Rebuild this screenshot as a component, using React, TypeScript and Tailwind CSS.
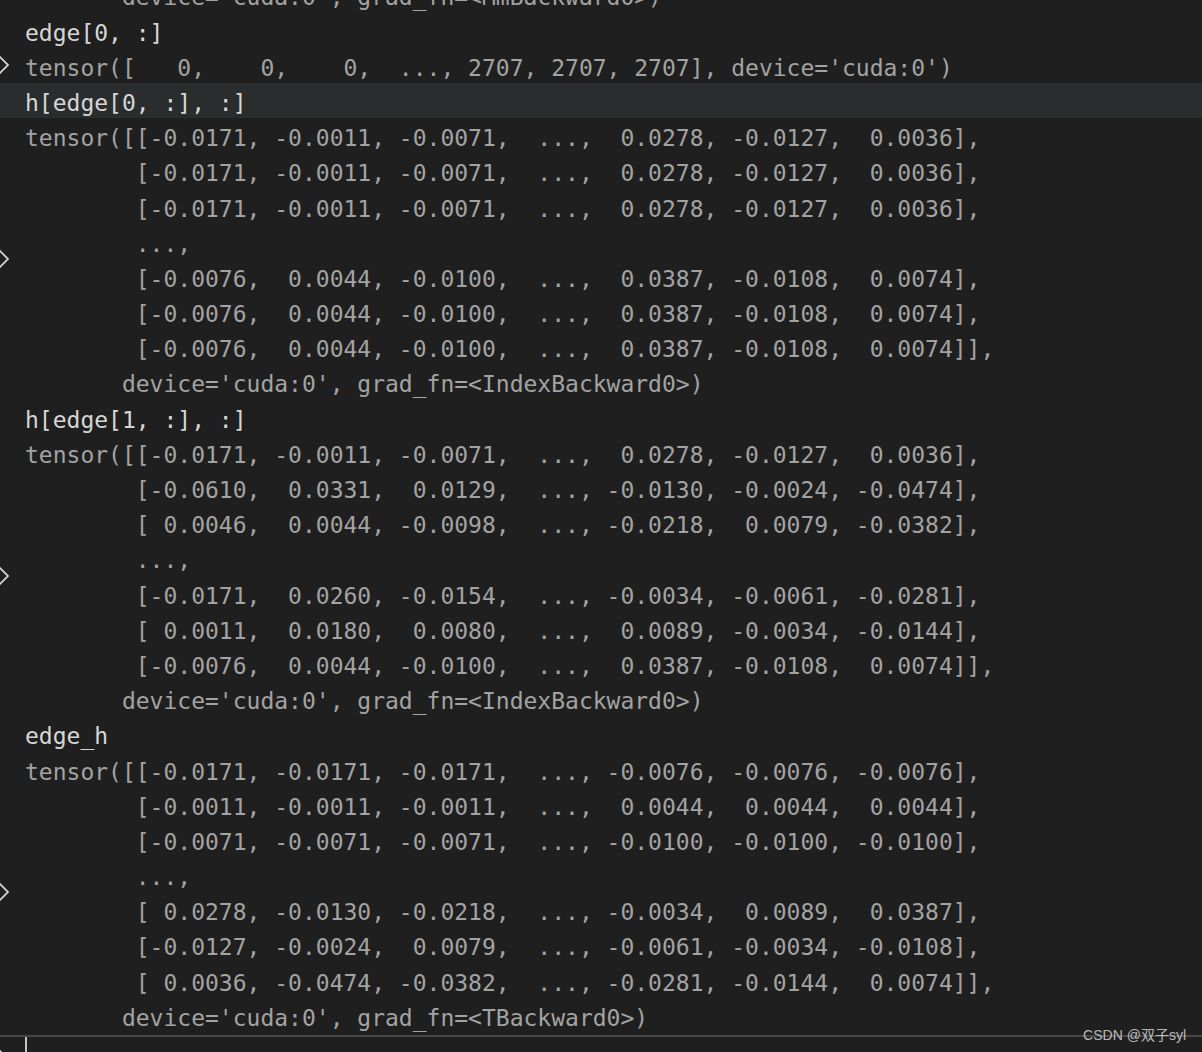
import React from 'react';

type Entry = { kind: 'in' | 'out'; lines: string[] };

const entries: Entry[] = [
  { kind: 'out', lines: ["       device='cuda:0', grad_fn=<MmBackward0>)"] },
  { kind: 'in', lines: ['edge[0, :]'] },
  { kind: 'out', lines: ["tensor([   0,    0,    0,  ..., 2707, 2707, 2707], device='cuda:0')"] },
  { kind: 'in', lines: ['h[edge[0, :], :]'] },
  {
    kind: 'out',
    lines: [
      'tensor([[-0.0171, -0.0011, -0.0071,  ...,  0.0278, -0.0127,  0.0036],',
      '        [-0.0171, -0.0011, -0.0071,  ...,  0.0278, -0.0127,  0.0036],',
      '        [-0.0171, -0.0011, -0.0071,  ...,  0.0278, -0.0127,  0.0036],',
      '        ...,',
      '        [-0.0076,  0.0044, -0.0100,  ...,  0.0387, -0.0108,  0.0074],',
      '        [-0.0076,  0.0044, -0.0100,  ...,  0.0387, -0.0108,  0.0074],',
      '        [-0.0076,  0.0044, -0.0100,  ...,  0.0387, -0.0108,  0.0074]],',
      "       device='cuda:0', grad_fn=<IndexBackward0>)",
    ],
  },
  { kind: 'in', lines: ['h[edge[1, :], :]'] },
  {
    kind: 'out',
    lines: [
      'tensor([[-0.0171, -0.0011, -0.0071,  ...,  0.0278, -0.0127,  0.0036],',
      '        [-0.0610,  0.0331,  0.0129,  ..., -0.0130, -0.0024, -0.0474],',
      '        [ 0.0046,  0.0044, -0.0098,  ..., -0.0218,  0.0079, -0.0382],',
      '        ...,',
      '        [-0.0171,  0.0260, -0.0154,  ..., -0.0034, -0.0061, -0.0281],',
      '        [ 0.0011,  0.0180,  0.0080,  ...,  0.0089, -0.0034, -0.0144],',
      '        [-0.0076,  0.0044, -0.0100,  ...,  0.0387, -0.0108,  0.0074]],',
      "       device='cuda:0', grad_fn=<IndexBackward0>)",
    ],
  },
  { kind: 'in', lines: ['edge_h'] },
  {
    kind: 'out',
    lines: [
      'tensor([[-0.0171, -0.0171, -0.0171,  ..., -0.0076, -0.0076, -0.0076],',
      '        [-0.0011, -0.0011, -0.0011,  ...,  0.0044,  0.0044,  0.0044],',
      '        [-0.0071, -0.0071, -0.0071,  ..., -0.0100, -0.0100, -0.0100],',
      '        ...,',
      '        [ 0.0278, -0.0130, -0.0218,  ..., -0.0034,  0.0089,  0.0387],',
      '        [-0.0127, -0.0024,  0.0079,  ..., -0.0061, -0.0034, -0.0108],',
      '        [ 0.0036, -0.0474, -0.0382,  ..., -0.0281, -0.0144,  0.0074]],',
      "       device='cuda:0', grad_fn=<TBackward0>)",
    ],
  },
];

// twisty chevron, partly hidden past the left edge like in the console
const Chevron = () => (
  <svg width="20" height="28" viewBox="0 0 20 28" className="-ml-[6px] shrink-0" fill="none">
    <path d="M3 3 L14 14 L3 25" stroke="#d0d0d0" strokeWidth="1.8" strokeLinejoin="miter" />
  </svg>
);

const App: React.FC = () => {
  return (
    <div className="relative h-[1052px] w-[1202px] overflow-hidden bg-[#1f1f1f] font-['DejaVu_Sans_Mono',monospace] text-[23px]">
      <div className="flex h-[1035px] flex-col overflow-hidden">
        <div className="-mt-[22.6px] flex flex-col">
          {entries.map((e, i) => (
            <div
              key={i}
              className={`flex items-center ${i === 3 ? 'bg-[#2a2d2e]' : ''}`}
            >
              <div className="flex w-[25px] shrink-0 items-center">
                {e.kind === 'out' && i > 0 ? <Chevron /> : null}
              </div>
              <div className={e.kind === 'in' ? 'text-[#d6d6d6]' : 'text-[#a3a3a3]'}>
                {e.lines.map((l, j) => (
                  <div key={j} className="h-[35.2px] whitespace-pre pt-[6px] leading-[29.2px]">
                    {l}
                  </div>
                ))}
              </div>
            </div>
          ))}
        </div>
      </div>
      <div className="flex h-[17px] items-start border-t-2 border-[#464646]">
        <div className="relative w-[25px] shrink-0">
          <svg width="20" height="28" viewBox="0 0 20 28" className="absolute -left-[6px] top-[8px]" fill="none">
            <path d="M3 3 L14 14 L3 25" stroke="#d0d0d0" strokeWidth="1.8" />
          </svg>
        </div>
        <div className="h-[15px] w-[2px] bg-[#c4c4c4]" />
      </div>
      <div className="absolute bottom-[9px] right-[16px] font-['Liberation_Sans','Noto_Sans_CJK_SC',sans-serif] text-[14px] leading-[16px] text-[#e0e0e0]/80">
        CSDN @双子syl
      </div>
    </div>
  );
};

export default App;
